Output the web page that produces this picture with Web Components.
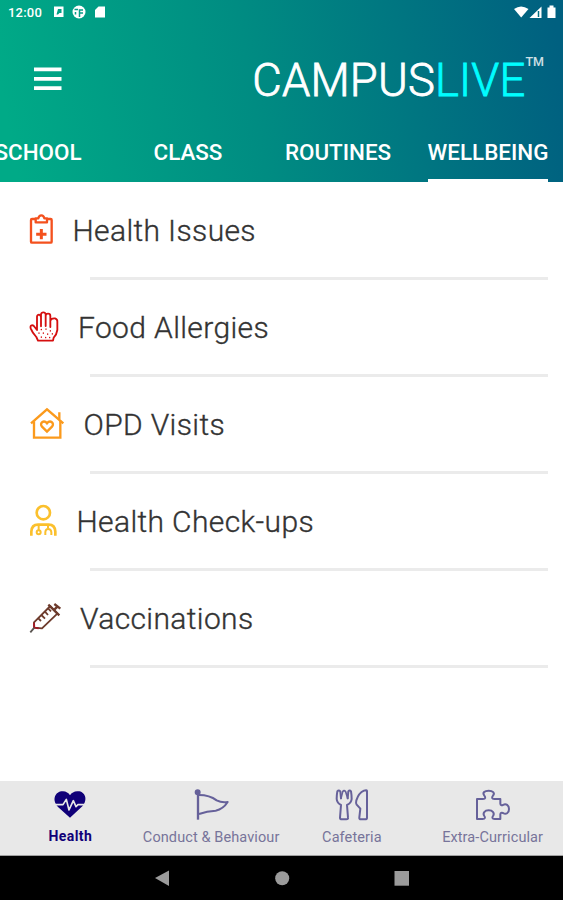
<!DOCTYPE html>
<html lang="en">
<head>
<meta charset="utf-8">
<title>CampusLive</title>
<style>
   body {
      margin: 0;
      font-family: Roboto, "Liberation Sans", sans-serif;
      background: #fff;
   }
</style>
</head>
<body>

<campus-app>
   <app-header slot="header">
      <status-bar slot="status">12:00</status-bar>
      <brand-name slot="brand" mark="TM">CAMPUS<span slot="accent">LIVE</span></brand-name>
      <tab-item>SCHOOL</tab-item>
      <tab-item>CLASS</tab-item>
      <tab-item>ROUTINES</tab-item>
      <tab-item active>WELLBEING</tab-item>
   </app-header>

   <list-row icon="clipboard">Health Issues</list-row>
   <list-row icon="hand">Food Allergies</list-row>
   <list-row icon="house">OPD Visits</list-row>
   <list-row icon="doctor">Health Check-ups</list-row>
   <list-row icon="syringe">Vaccinations</list-row>

   <nav-item slot="nav" icon="heart" active>Health</nav-item>
   <nav-item slot="nav" icon="flag">Conduct &amp; Behaviour</nav-item>
   <nav-item slot="nav" icon="cutlery">Cafeteria</nav-item>
   <nav-item slot="nav" icon="puzzle">Extra-Curricular</nav-item>
   <system-keys slot="keys"></system-keys>
</campus-app>

<script>
// every icon is drawn on a grid three times finer than a pixel
const icons = {
   clipboard: {
      box: [24, 17, 97.5, 120],
      art: `<g fill="none" stroke="#f4511e" stroke-width="7" stroke-linejoin="round">
         <path d="M46 41H36Q33 41 33 44V109Q33 112 36 112H92Q95 112 95 109V44Q95 41 92 41H82"/>
         <path d="M47 39H55Q57 30 64 30Q71 30 73 39H81V51H47Z"/>
         <path d="M64 71V102M48.500 86.500H79.500" stroke-width="9"/></g>`
   },
   hand: {
      box: [24, 24, 114, 120],
      art: `<g fill="none" stroke="#d50f0f" stroke-width="5.500" stroke-linecap="round" stroke-linejoin="round">
         <path d="M54 122L49 111Q37 98 32 85Q30 77 35 76Q40 75 44 81L51 90V50Q52 44 57 44Q62 45 63 51V79V43Q64 37 70 37Q76 37 77 43V78V47Q78 41 84 41Q91 41 91 48V81V62Q93 54 105 55Q113 58 112 65V90Q110 104 101 113L99 122Z"/>
         <path d="M64 88V89M78 87V88M91 92V93M57 99V100M70 99V100M83 102V103M97 101V102M64 111V112M77 112V113M89 112V113" stroke-width="4"/></g>`
   },
   house: {
      box: [24, 21, 130.5, 120],
      art: `<g fill="none" stroke="#fb9a1c" stroke-width="7">
         <path d="M33 76L81 34L130 76"/>
         <path d="M42 70V119H121V68M118 64V43"/>
         <path d="M81 101L66 86C57 76 71 64 81 76C91 64 105 76 96 86Z"/></g>`
   },
   doctor: {
      box: [24, 21, 109.5, 120],
      art: `<g fill="none" stroke="#fbc02d" stroke-width="8">
         <circle cx="70" cy="53" r="20"/>
         <path d="M34 122V110Q35 89 54 89H86Q105 89 106 110V122"/>
         <path d="M56 89V105M84 88V100" stroke-width="6"/>
         <circle cx="56" cy="112" r="6" stroke-width="6"/>
         <path d="M76 120V111Q77 102 84 102Q93 102 94 111V120" stroke-width="6"/></g>`
   },
   syringe: {
      box: [24, 21, 120, 120],
      art: `<g fill="none" stroke="#6d3b2c" stroke-width="5.500" stroke-linejoin="round">
         <path d="M43 107L42 91L91 42L112 65L66 109Z"/>
         <path d="M85 38L118 70M103 53L112 44M103 36L121 50" stroke-width="7"/>
         <path d="M55 79L63 87M64 69L75 80M75 59L84 69M85 50L93 58"/>
         <path d="M42 92V107L56 109" stroke="#a51b26"/>
         <path d="M43 107L31 121" stroke="#5b5551"/></g>`
   },
   heart: {
      box: [151, 48, 120, 108],
      art: `<path fill="#100078" d="M211 143L175 111C154 88 168 63 190 64Q204 65 211 76Q218 65 233 64C255 62 267 88 248 109Z"/>
         <path fill="none" stroke="#e8e8e8" stroke-width="5" stroke-linejoin="round" d="M164 104H190L200 88L208 120L221 92L229 110L235 104H259"/>`
   },
   flag: {
      box: [573, 48, 120, 108],
      art: `<g fill="none" stroke="#66619a" stroke-width="6" stroke-linejoin="round">
         <path d="M594 67V149" stroke-width="7"/>
         <path d="M597 75Q629 75 650 91Q665 99 683 96Q670 117 647 122Q621 123 597 132"/>
         <circle cx="593" cy="67" r="6" fill="#66619a"/></g>`
   },
   cutlery: {
      box: [153, 48, 120, 108],
      art: `<g fill="none" stroke="#66619a" stroke-width="6" stroke-linejoin="round" stroke-linecap="round">
         <path d="M169 64Q167 75 167 87Q168 99 180 105L177 143Q177 148 183 148H196Q202 148 201 143L198 105Q211 99 212 87Q212 75 210 64Q206 59 202 64L200 85M169 64Q173 59 178 64L180 85"/>
         <path d="M180 85L185 65Q189 59 194 65L200 85" stroke-width="5"/>
         <path d="M258 63V143Q258 148 252 148H240Q234 148 235 142L238 116L227 104Q224 99 226 91Q233 69 249 62Q258 59 258 63Z"/></g>`
   },
   puzzle: {
      box: [575, 48, 120, 108],
      art: `<path fill="none" stroke="#66619a" stroke-width="6" stroke-linejoin="round" d="M587 87H605C613 87 613 82 609 77C602 68 610 62 622 62C634 62 642 69 635 77C631 82 631 87 639 87H657V101Q658 108 665 105C674 99 683 106 683 117C683 129 674 135 665 129Q658 126 657 133V147H640C632 147 632 142 635 138C641 129 634 121 622 121C610 121 603 129 609 138C612 142 612 147 604 147H587Z"/>`
   }
};

function drawIcon(name) {
   const { box, art } = icons[name];
   return `<svg width="${box[2] / 3}" height="${box[3] / 3}" viewBox="${box.join(" ")}">${art}</svg>`;
}

class CampusApp extends HTMLElement {
   constructor() {
      super();
      this.attachShadow({ mode: "open" }).innerHTML = `
         <style>
            :host {
               display: flex;
               flex-direction: column;
               height: 900px;
               overflow: hidden;
            }
            main { flex: 1; }
            nav {
               display: grid;
               grid-template-columns: repeat(4, 1fr);
               box-sizing: border-box;
               height: 75px;
               background: #e8e8e8;
               border-bottom: 1px solid #a0a0a0;
            }
         </style>
         <slot name="header"></slot>
         <main><slot></slot></main>
         <nav><slot name="nav"></slot></nav>
         <slot name="keys"></slot>`;
   }
}

class AppHeader extends HTMLElement {
   constructor() {
      super();
      this.attachShadow({ mode: "open" }).innerHTML = `
         <style>
            :host {
               display: flex;
               flex-direction: column;
               height: 182px;
               color: #fff;
               background: linear-gradient(80deg, #00aa87 3%, #008c82 45%, #006080 98%);
            }
            .bar {
               display: flex;
               align-items: center;
               justify-content: space-between;
               box-sizing: border-box;
               height: 99px;
               padding: 11px 19px 0 34px;
            }
            .tabs {
               display: flex;
               flex: 1;
               justify-content: flex-end;
               overflow: hidden;
            }
         </style>
         <slot name="status"></slot>
         <div class="bar">
            <svg width="28" height="26" viewBox="0 0 28 26" stroke="#fff" stroke-width="3.800">
               <path d="M0 3.400H27.500M0 12.900H27.500M0 22.200H27.500"/>
            </svg>
            <slot name="brand"></slot>
         </div>
         <div class="tabs"><slot></slot></div>`;
   }
}

class StatusBar extends HTMLElement {
   constructor() {
      super();
      this.attachShadow({ mode: "open" }).innerHTML = `
         <style>
            :host {
               display: flex;
               align-items: center;
               justify-content: space-between;
               height: 24px;
               padding: 0 6px 0 8px;
               font-size: 13px;
               font-weight: 500;
               letter-spacing: 0.2px;
            }
            .left { display: flex; align-items: center; gap: 12px; }
            svg { fill: #fff; }
         </style>
         <span class="left"><slot></slot>
            <svg width="52" height="14" viewBox="0 0 52 14">
               <path fill-rule="evenodd" d="M0 1.500H9.500V12H0ZM2.500 9.500H4L5.500 8H7.500V4H4Z"/>
               <circle cx="25" cy="7" r="6.500"/>
               <path d="M20.500 4.500H24M21.500 7V9.500M25.500 12V5H29M29 8H26" fill="none" stroke="#079c86" stroke-width="1.500"/>
               <path d="M44.500 1.500H51V12.500H41V5Z"/>
            </svg>
         </span>
         <svg width="44" height="16" viewBox="0 0 44 16">
            <path d="M1 5Q8 0 15.500 5L8.200 13.500Z"/>
            <path d="M16.500 14L28.500 2.500V14Z"/>
            <path d="M25.500 7V13" stroke="#006c80" stroke-width="1.500"/>
            <path d="M34.500 3.500H36.500V1.500H40.500V3.500H42.500V14H34.500Z"/>
         </svg>`;
   }
}

class BrandName extends HTMLElement {
   constructor() {
      super();
      this.attachShadow({ mode: "open" }).innerHTML = `
         <style>
            :host {
               display: flex;
               align-items: flex-start;
               padding-top: 3px;
               font-size: 45.3px;
               line-height: 52px;
               font-weight: 300;
               letter-spacing: 0.2px;
               -webkit-text-stroke: 0.8px;
            }
            .accent { color: #00fdff; }
            sup {
               margin-top: -1px;
               font-size: 12.5px;
               line-height: 16px;
               font-weight: 500;
               letter-spacing: 0;
               opacity: 0.8;
               -webkit-text-stroke: 0;
            }
         </style>
         <slot></slot><slot name="accent" class="accent"></slot><sup></sup>`;
   }

   connectedCallback() {
      this.shadowRoot.querySelector("sup").textContent = this.getAttribute("mark");
   }
}

class TabItem extends HTMLElement {
   constructor() {
      super();
      this.attachShadow({ mode: "open" }).innerHTML = `
         <style>
            :host {
               display: flex;
               justify-content: center;
               flex: 0 0 150px;
               font-size: 22.4px;
               font-weight: 500;
            }
            span {
               box-sizing: border-box;
               height: 59px;
               padding-top: 16px;
               line-height: 27px;
               white-space: nowrap;
            }
            :host([active]) span { border-bottom: 3px solid #fff; }
         </style>
         <span><slot></slot></span>`;
   }
}

class ListRow extends HTMLElement {
   constructor() {
      super();
      this.attachShadow({ mode: "open" });
   }

   connectedCallback() {
      this.shadowRoot.innerHTML = `
         <style>
            :host {
               display: flex;
               flex-direction: column;
               height: 97px;
               color: #333;
               font-size: 30px;
               font-weight: 300;
               letter-spacing: 0.37px;
               -webkit-text-stroke: 0.35px;
            }
            .line {
               display: flex;
               flex: 1;
               align-items: center;
               gap: 12px;
               padding: 3px 0 0 28px;
            }
            span { margin-top: -2px; }
            hr {
               align-self: stretch;
               height: 3px;
               margin: 0 15px -1px 90px;
               border: 0;
               background: #ebebeb;
            }
         </style>
         <div class="line">${drawIcon(this.getAttribute("icon"))}<span><slot></slot></span></div>
         <hr>`;
   }
}

class NavItem extends HTMLElement {
   constructor() {
      super();
      this.attachShadow({ mode: "open" });
   }

   connectedCallback() {
      this.shadowRoot.innerHTML = `
         <style>
            :host {
               display: flex;
               flex-direction: column;
               align-items: center;
               gap: 7px;
               padding-top: 5px;
               color: #77749a;
               font-size: 14.5px;
               line-height: 17px;
               letter-spacing: 0.1px;
               white-space: nowrap;
            }
            :host([active]) {
               gap: 6px;
               color: #100078;
               font-size: 14px;
               font-weight: 700;
               letter-spacing: 0.4px;
            }
            svg { flex: none; }
         </style>
         ${drawIcon(this.getAttribute("icon"))}
         <span><slot></slot></span>`;
   }
}

class SystemKeys extends HTMLElement {
   constructor() {
      super();
      this.attachShadow({ mode: "open" }).innerHTML = `
         <style>
            :host {
               display: flex;
               align-items: center;
               justify-content: center;
               height: 44px;
               background: #000;
            }
         </style>
         <svg width="256" height="20" viewBox="0 0 256 20" fill="#9b9b9b">
            <path d="M1 10L15 2.500V18Z"/>
            <circle cx="128.200" cy="10.300" r="7"/>
            <path d="M240.500 3H255V17.700H240.500Z"/>
         </svg>`;
   }
}

customElements.define("campus-app", CampusApp);
customElements.define("app-header", AppHeader);
customElements.define("status-bar", StatusBar);
customElements.define("brand-name", BrandName);
customElements.define("tab-item", TabItem);
customElements.define("list-row", ListRow);
customElements.define("nav-item", NavItem);
customElements.define("system-keys", SystemKeys);
</script>
</body>
</html>
